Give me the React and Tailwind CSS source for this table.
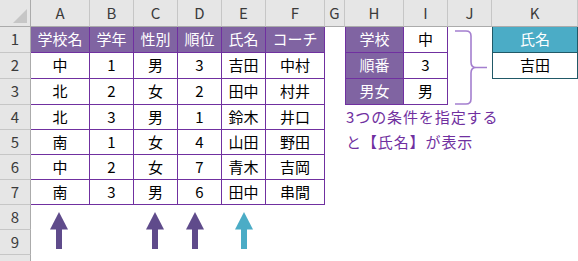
import React from "react";

const COL = ["col-start-1","col-start-2","col-start-3","col-start-4","col-start-5","col-start-6","col-start-7","col-start-8","col-start-9","col-start-10","col-start-11","col-start-12"];
const ROW = ["row-start-1","row-start-2","row-start-3","row-start-4","row-start-5","row-start-6","row-start-7","row-start-8","row-start-9","row-start-10","row-start-11","row-start-12"];

const letters = ["A","B","C","D","E","F","G","H","I","J","K"];

const table = [
  ["学校名","学年","性別","順位","氏名","コーチ"],
  ["中","1","男","3","吉田","中村"],
  ["北","2","女","2","田中","村井"],
  ["北","3","男","1","鈴木","井口"],
  ["南","1","女","4","山田","野田"],
  ["中","2","女","7","青木","吉岡"],
  ["南","3","男","6","田中","串間"],
];

const side = [["学校","中"],["順番","3"],["男女","男"]];

function Arrow({ color, offset }) {
  return (
    <svg width="18" height="38" viewBox="0 0 18 38" className={offset}>
      <polygon points="9,0 18,17.5 0,17.5" fill={color} />
      <rect x="6" y="17" width="6" height="20" fill={color} />
    </svg>
  );
}

export default function App() {
  return (
    <div className="w-[578px] h-[261px] overflow-hidden bg-white font-['Noto_Sans_CJK_JP',sans-serif] text-[15px] text-black">
      <div className="grid grid-cols-[31px_59px_44px_44px_44px_44px_59px_20px_59px_44px_44px_86px] grid-rows-[27px_26px_26px_26px_25px_25px_25px_25px_25px_25px_25px]">
        {/* corner */}
        <div className="col-start-1 row-start-1 bg-[#e6e6e6] border-r border-b border-[#ababab] relative">
          <div className="absolute right-[3px] bottom-[3px] w-0 h-0 border-l-[14px] border-l-transparent border-b-[14px] border-b-[#c6c6c6]" />
        </div>
        {letters.map((l, i) => (
          <div key={l} className={`${COL[i + 1]} row-start-1 bg-[#e6e6e6] border-r border-b border-r-[#c6c6c6] border-b-[#ababab] flex items-center justify-center text-[#3b3b3b] text-[15px]`}>
            {l}
          </div>
        ))}
        {/* row headers */}
        {[1,2,3,4,5,6,7,8,9,10].map((n) => (
          <div key={n} className={`col-start-1 ${ROW[n]} bg-[#e6e6e6] border-r border-b border-r-[#ababab] border-b-[#c6c6c6] flex items-center justify-center text-[#3b3b3b] text-[15px]`}>
            {n}
          </div>
        ))}
        {/* main table */}
        {table.map((row, r) =>
          row.map((v, c) => (
            <div
              key={`${r}-${c}`}
              className={`${COL[c + 1]} ${ROW[r + 1]} border-r border-b border-[#7030a0] flex items-center justify-center ${r === 0 ? "bg-[#8064a2] text-white" : "bg-white"}`}
            >
              {v}
            </div>
          ))
        )}
        {/* side table */}
        {side.map(([k, v], r) => (
          <React.Fragment key={k}>
            <div className={`col-start-9 ${ROW[r + 1]} bg-[#8064a2] text-white border-l border-r border-b border-[#7030a0] flex items-center justify-center`}>
              {k}
            </div>
            <div className={`col-start-10 ${ROW[r + 1]} border-r border-b border-[#7030a0] flex items-center justify-center`}>
              {v}
            </div>
          </React.Fragment>
        ))}
        {/* bracket */}
        <div className="col-start-11 row-start-2 row-span-3">
          <svg width="44" height="78" viewBox="0 0 44 78" fill="none">
            <path
              d="M7 4 H18 Q23 4 23 9 V35 Q23 40.5 28 40.5 H39 M28 40.5 Q23 40.5 23 46 V72 Q23 77 18 77 H7"
              stroke="#a47fcf"
              strokeWidth="1.6"
            />
          </svg>
        </div>
        {/* result table */}
        <div className="col-start-12 row-start-2 bg-[#4bacc6] text-white border-l border-r border-b border-[#215967] flex items-center justify-center">
          氏名
        </div>
        <div className="col-start-12 row-start-3 bg-white border-l border-r border-b border-[#215967] flex items-center justify-center">
          吉田
        </div>
        {/* note */}
        <div className="col-start-9 col-span-4 row-start-5 flex items-center text-[#7030a0] whitespace-nowrap pl-[1px] tracking-[0.9px]">
          3つの条件を指定する
        </div>
        <div className="col-start-9 col-span-4 row-start-6 flex items-center text-[#7030a0] whitespace-nowrap pl-[1px] tracking-[0.9px]">
          と【氏名】が表示
        </div>
        {/* arrows */}
        <div className="col-start-2 row-start-9 row-span-2 pt-[7px]">
          <Arrow color="#5f4b8b" offset="ml-[19px]" />
        </div>
        <div className="col-start-4 row-start-9 row-span-2 pt-[7px]">
          <Arrow color="#5f4b8b" offset="ml-[12px]" />
        </div>
        <div className="col-start-5 row-start-9 row-span-2 pt-[7px]">
          <Arrow color="#5f4b8b" offset="ml-[8px]" />
        </div>
        <div className="col-start-6 row-start-9 row-span-2 pt-[7px]">
          <Arrow color="#4bacc6" offset="ml-[13px]" />
        </div>
      </div>
    </div>
  );
}
